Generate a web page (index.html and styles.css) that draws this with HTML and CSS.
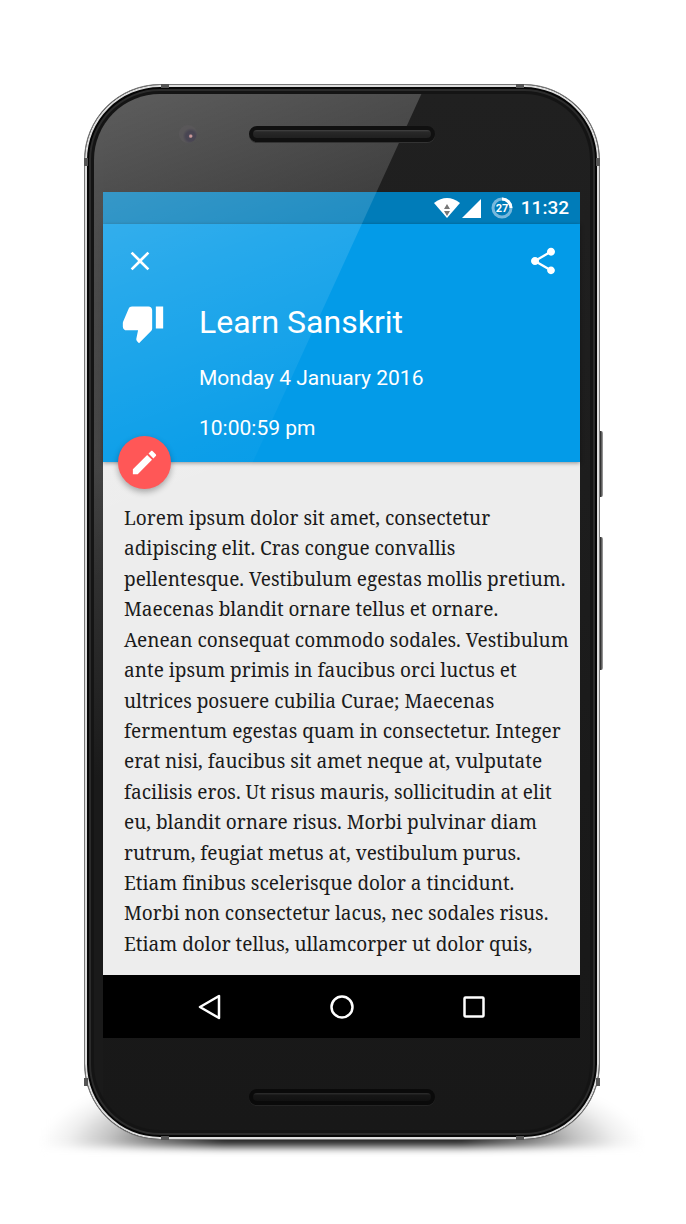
FILE: index.html
```html
<!DOCTYPE html>
<html lang="en">
<head>
<meta charset="utf-8">
<meta name="viewport" content="width=device-width, initial-scale=1">
<title>Learn Sanskrit</title>
<link rel="stylesheet" href="styles.css">
</head>
<body>
<div class="phone">
  <div class="ground-shadow"></div>
  <div class="side-key side-key-power"></div>
  <div class="side-key side-key-volume"></div>
  <div class="frame">
    <i class="band band-h band-left band-top"></i>
    <i class="band band-h band-right band-top"></i>
    <i class="band band-h band-left band-bottom"></i>
    <i class="band band-h band-right band-bottom"></i>
    <i class="band band-v band-upper band-west"></i>
    <i class="band band-v band-upper band-east"></i>
    <i class="band band-v band-lower band-west"></i>
    <i class="band band-v band-lower band-east"></i>
    <div class="glass">
      <div class="bezel-top"><div class="speaker"></div><div class="camera"></div></div>
      <div class="screen">
        <div class="status">
          <svg class="wifi" viewBox="0 0 26 20" aria-hidden="true"><path d="M0 5Q13-5 26 5L13 20Z" fill="#fff"/><path d="M10 11h6l-3-5zM10 13h6l-3 5z" fill="#777"/></svg>
          <svg class="signal" viewBox="0 0 19 19" aria-hidden="true"><path d="M0 19L19 0V19Z" fill="#fff"/></svg>
          <svg class="battery" viewBox="0 0 22 22" aria-hidden="true"><circle cx="11" cy="11" r="9" fill="none" stroke="#78b8dc" stroke-width="3"/><path d="M11 2A9 9 0 0 1 20 11" fill="none" stroke="#fff" stroke-width="3"/><text class="battery-text" x="11" y="15" text-anchor="middle">27</text></svg>
          <time class="clock">11:32</time>
        </div>
        <header class="header">
          <div class="toolbar">
            <button class="icon-button" type="button" aria-label="Close"><svg viewBox="0 0 24 24"><path d="M19 6.410L17.590 5 12 10.590 6.410 5 5 6.410 10.590 12 5 17.590 6.410 19 12 13.410 17.590 19 19 17.590 13.410 12z"/></svg></button>
            <button class="icon-button" type="button" aria-label="Share"><svg viewBox="0 0 24 24"><path d="M18 16.080c-.76 0-1.440.3-1.960.770L8.910 12.700c.05-.23.090-.46.090-.7s-.04-.47-.09-.7l7.050-4.110c.54.5 1.250.810 2.040.810 1.660 0 3-1.340 3-3s-1.340-3-3-3-3 1.340-3 3c0 .24.040.470.090.7L8.040 9.810C7.500 9.310 6.790 9 6 9c-1.660 0-3 1.340-3 3s1.340 3 3 3c.79 0 1.500-.31 2.040-.81l7.120 4.160c-.05.21-.08.430-.08.650 0 1.610 1.310 2.920 2.920 2.920s2.920-1.310 2.920-2.920-1.310-2.920-2.920-2.920z"/></svg></button>
          </div>
          <div class="summary">
            <svg class="thumb" viewBox="0 0 24 24" aria-hidden="true"><path d="M15 3H6c-.83 0-1.540.5-1.840 1.220l-3.020 7.050c-.09.23-.14.470-.14.730v2c0 1.100.9 2 2 2h6.310l-.95 4.570-.03.320c0 .41.170.790.440 1.060L9.830 23l6.590-6.590c.36-.36.580-.86.580-1.410V5c0-1.100-.9-2-2-2zm4 0v12h4V3h-4z"/></svg>
            <div class="details">
              <h1 class="title">Learn Sanskrit</h1>
              <p class="meta">Monday 4 January 2016</p>
              <p class="meta">10:00:59 pm</p>
            </div>
          </div>
          <button class="fab" type="button" aria-label="Edit"><svg viewBox="0 0 24 24"><path d="M3 17.250V21h3.750L17.810 9.940l-3.750-3.750L3 17.250zM20.710 7.040c.39-.39.390-1.020 0-1.410l-2.340-2.340c-.39-.39-1.020-.39-1.410 0l-1.830 1.830 3.750 3.750 1.830-1.830z"/></svg></button>
        </header>
        <main class="note">
          <span>Lorem ipsum dolor sit amet, consectetur</span>
          <span>adipiscing elit. Cras congue convallis</span>
          <span>pellentesque. Vestibulum egestas mollis pretium.</span>
          <span>Maecenas blandit ornare tellus et ornare.</span>
          <span>Aenean consequat commodo sodales. Vestibulum</span>
          <span>ante ipsum primis in faucibus orci luctus et</span>
          <span>ultrices posuere cubilia Curae; Maecenas</span>
          <span>fermentum egestas quam in consectetur. Integer</span>
          <span>erat nisi, faucibus sit amet neque at, vulputate</span>
          <span>facilisis eros. Ut risus mauris, sollicitudin at elit</span>
          <span>eu, blandit ornare risus. Morbi pulvinar diam</span>
          <span>rutrum, feugiat metus at, vestibulum purus.</span>
          <span>Etiam finibus scelerisque dolor a tincidunt.</span>
          <span>Morbi non consectetur lacus, nec sodales risus.</span>
          <span>Etiam dolor tellus, ullamcorper ut dolor quis,</span>
        </main>
        <nav class="nav" aria-label="System">
          <button class="nav-button" type="button" aria-label="Back"><svg viewBox="0 0 28 28"><path d="M4 14L23 3V25Z"/></svg></button>
          <button class="nav-button" type="button" aria-label="Home"><svg viewBox="0 0 28 28"><circle cx="14" cy="14" r="10.500"/></svg></button>
          <button class="nav-button" type="button" aria-label="Recent apps"><svg viewBox="0 0 28 28"><rect x="4.500" y="4.500" width="19" height="19" rx="1"/></svg></button>
        </nav>
      </div>
      <div class="bezel-bottom"><div class="speaker"></div></div>
      <div class="gloss"></div>
    </div>
  </div>
</div>
</body>
</html>
```
FILE: styles.css
```css
* { box-sizing: border-box; }

body {
  margin: 0;
  min-height: 100vh;
  padding: 84px 86px 84px 84px;
  display: grid;
  background: #fff;
  font-family: Roboto, "Liberation Sans", sans-serif;
}

button { border: 0; padding: 0; background: none; color: inherit; }
button svg { display: block; }

.phone { position: relative; display: grid; isolation: isolate; }

.ground-shadow {
  position: absolute;
  z-index: -1;
  left: -44px;
  right: -44px;
  bottom: -7px;
  height: 90px;
  background: radial-gradient(50% 100% at 50% 100%, #222 40%, #777 62%, #c4c4c4 78%, #f0f0f0 91%, #fff 100%);
  filter: blur(4px);
}

.side-key {
  position: absolute;
  z-index: -1;
  right: -3px;
  width: 6px;
  border-radius: 2px;
  background: linear-gradient(90deg, #333 60%, #aaa);
}
.side-key-power { top: 347px; height: 66px; }
.side-key-volume { top: 453px; height: 133px; }

.frame {
  position: relative;
  display: grid;
  padding: 9px;
  border: 1px solid #777;
  border-radius: 76px;
  background: #141414;
  box-shadow: inset 0 0 0 2px #ddd, inset 0 0 0 4px #050505, inset 0 0 0 6px #2b2b2b;
}

.band { position: absolute; background: #555; }
.band-h { width: 8px; height: 4px; }
.band-v { width: 4px; height: 8px; }
.band-left { left: 76px; }
.band-right { right: 75px; }
.band-top { top: -1px; }
.band-bottom { bottom: -1px; }
.band-upper { top: 73px; }
.band-lower { bottom: 53px; }
.band-west { left: -1px; }
.band-east { right: -1px; }

.glass {
  position: relative;
  display: flex;
  flex-direction: column;
  padding: 0 10px 0 9px;
  overflow: hidden;
  border-radius: 66px;
  background:
    linear-gradient(#202020, #202020 9%, #3c3c3c 36%, #1a1a1a 66%) left / 9px 100% no-repeat,
    linear-gradient(#202020, #1c1c1c 50%, #1a1a1a 66%, #181818);
}

.bezel-top, .bezel-bottom { display: flex; justify-content: center; position: relative; }
.bezel-top { height: 98px; padding-top: 32px; }
.bezel-bottom { height: 92px; padding-top: 51px; }

.speaker {
  position: relative;
  z-index: 1;
  width: 186px;
  height: 16px;
  border: 4px solid #101010;
  border-radius: 8px;
  background: linear-gradient(#444, #282828 25%, #202020);
  box-shadow: 0 1px 0 #333;
}
.bezel-bottom .speaker {
  border-color: #0a0a0a;
  background: linear-gradient(#2e2e2e, #161616 30%, #111);
  box-shadow: 0 1px 0 #242424;
}
.camera {
  position: absolute;
  z-index: 1;
  left: 76px;
  top: 31px;
  width: 18px;
  height: 18px;
  border-radius: 50%;
  background: radial-gradient(circle at 65% 62%, #c99 6%, #4a4654 14%, #484552 30%, #595759 50%);
}

.screen { flex: 1; display: flex; flex-direction: column; background: #ededed; }

.status {
  display: flex;
  align-items: center;
  justify-content: flex-end;
  height: 32px;
  padding-right: 11px;
  background: #007cb9;
  color: #fff;
}
.wifi { width: 26px; height: 20px; margin-right: 2px; }
.signal { width: 19px; height: 19px; margin-right: 10px; }
.battery { width: 22px; height: 22px; margin-right: 8px; }
.battery-text { fill: #fff; font-size: 11px; font-weight: 700; }
.clock { font-size: 19px; font-weight: 500; line-height: 34px; }

.header {
  position: relative;
  height: 238px;
  background: #039be8;
  color: #fff;
  box-shadow: 0 1px 4px rgba(0, 0, 0, 0.4);
}
.toolbar { display: flex; justify-content: space-between; padding: 21px 21px 0; }
.icon-button svg { width: 32px; height: 32px; fill: #fff; }

.summary { display: flex; padding: 24px 18px 0; }
.thumb { width: 44px; height: 44px; fill: #fff; }
.details { padding-left: 34px; }
.title { margin: 0; font-size: 32px; font-weight: 400; line-height: 42px; }
.meta { margin: 0; font-size: 21px; line-height: 50px; }
.title + .meta { padding-top: 10px; }

.fab {
  position: absolute;
  z-index: 1;
  left: 15px;
  bottom: -27px;
  width: 53px;
  height: 53px;
  display: grid;
  place-items: center;
  border-radius: 50%;
  background: #ff5757;
  box-shadow: 0 3px 6px rgba(0, 0, 0, 0.3);
}
.fab svg { width: 31px; height: 31px; fill: #fff; }

.note {
  flex: 1;
  display: flex;
  flex-direction: column;
  justify-content: space-between;
  padding: 41px 0 16px 21px;
  color: #1a1a1a;
  font-family: "Noto Serif", "Droid Serif", "Liberation Serif", serif;
  font-size: 19px;
  font-variant-ligatures: none;
  line-height: 30px;
  white-space: nowrap;
}

.nav {
  display: flex;
  align-items: center;
  justify-content: center;
  gap: 104px;
  height: 63px;
  background: #000;
}
.nav-button svg { width: 28px; height: 28px; fill: none; stroke: #fff; stroke-width: 2.5; stroke-linejoin: round; }

/* Diagonal reflection across the glass */
.gloss {
  position: absolute;
  inset: 0;
  pointer-events: none;
  clip-path: polygon(0 0, 66% 0, 0 69%);
  background: linear-gradient(160deg, rgba(255, 255, 255, 0.28), rgba(255, 255, 255, 0.14) 17%, rgba(255, 255, 255, 0.04) 32%, rgba(255, 255, 255, 0) 40%);
}
```
